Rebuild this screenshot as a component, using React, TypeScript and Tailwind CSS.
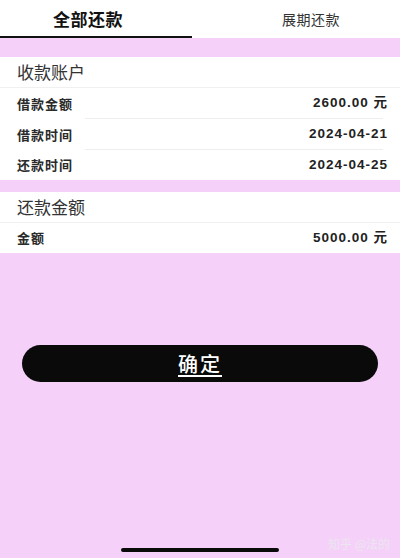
import React from "react";

const font = { fontFamily: '"Noto Sans CJK SC", "Noto Sans", sans-serif' };
const numFont = { fontFamily: '"Liberation Sans", "Noto Sans CJK SC", sans-serif' };

function Row({ label, value, divider, h = "h-[31px]" }: { label: string; value: string; divider: boolean; h?: string }) {
  return (
    <div className={`relative flex ${h} items-center justify-between pl-[17px] pr-[12px]`}>
      <span className="text-[13px] font-semibold tracking-[1px] text-[#2a2a2a]">{label}</span>
      <span className="text-[13.5px] font-bold tracking-[1px] text-[#222]" style={numFont}>
        {value}
      </span>
      {divider && <div className="absolute bottom-0 left-[85px] right-[17px] h-px bg-[#eeeeee]" />}
    </div>
  );
}

function Header({ title }: { title: string }) {
  return (
    <div className="flex h-[31px] items-center border-b border-[#f0f0f0] pl-[17px]">
      <span className="text-[17px] text-[#333]">{title}</span>
    </div>
  );
}

export default function App() {
  return (
    <div className="relative min-h-[558px] w-[400px] overflow-hidden bg-[#f5d1fa]" style={font}>
      <div className="flex h-[38px] bg-white">
        <div className="relative flex w-[192px] items-center pl-[53px]">
          <span className="text-[17px] font-bold tracking-[0.5px] text-[#111]">全部还款</span>
          <div className="absolute bottom-0 left-0 right-0 h-[2px] bg-[#111]" />
        </div>
        <div className="flex flex-1 items-center pl-[90px]">
          <span className="text-[14px] tracking-[0.5px] text-[#333]">展期还款</span>
        </div>
      </div>
      <div className="h-[19px]" />
      <div className="bg-white">
        <Header title="收款账户" />
        <Row label="借款金额" value="2600.00 元" divider />
        <Row label="借款时间" value="2024-04-21" divider />
        <Row label="还款时间" value="2024-04-25" divider={false} h="h-[30px]" />
      </div>
      <div className="h-[12px]" />
      <div className="bg-white">
        <Header title="还款金额" />
        <Row label="金额" value="5000.00 元" divider={false} h="h-[30px]" />
      </div>
      <div className="px-[22px] pt-[92px]">
        <button className="flex h-[37px] w-full items-center justify-center rounded-full bg-[#0a0a0a]">
          <span className="text-[20px] font-medium tracking-[2px] text-white underline underline-offset-[3px]">确定</span>
        </button>
      </div>
      <div className="absolute bottom-[6px] left-[121px] h-[4px] w-[158px] rounded-full bg-[#0a0a0a]" />
      <div className="absolute bottom-[5px] left-[328px] whitespace-nowrap text-[12px] text-[#ece6ef]">知乎 @法的</div>
    </div>
  );
}
